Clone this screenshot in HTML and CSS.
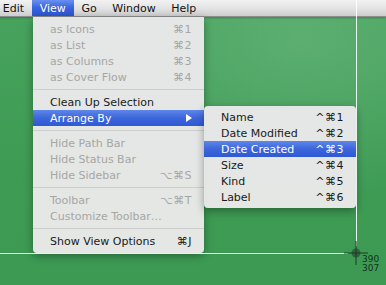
FILE: index.html
```html
<!DOCTYPE html>
<html lang="en">
<head>
  <meta charset="UTF-8">
  <title>Finder View Menu</title>
  <link rel="stylesheet" href="styles.css">
</head>
<body>
  <div class="screen">
    <div class="menubar">
      <span class="mb-item">Edit</span>
      <span class="mb-item active">View</span>
      <span class="mb-item">Go</span>
      <span class="mb-item">Window</span>
      <span class="mb-item">Help</span>
    </div>

    <!-- View menu -->
    <ul class="menu main-menu">
      <li class="off"><span>as Icons</span><span class="key">⌘1</span></li>
      <li class="off"><span>as List</span><span class="key">⌘2</span></li>
      <li class="off"><span>as Columns</span><span class="key">⌘3</span></li>
      <li class="off"><span>as Cover Flow</span><span class="key">⌘4</span></li>
      <li class="sep"></li>
      <li><span>Clean Up Selection</span></li>
      <li class="hl"><span>Arrange By</span><span class="arrow"></span></li>
      <li class="sep"></li>
      <li class="off"><span>Hide Path Bar</span></li>
      <li class="off"><span>Hide Status Bar</span></li>
      <li class="off"><span>Hide Sidebar</span><span class="key">⌥⌘S</span></li>
      <li class="sep"></li>
      <li class="off"><span>Toolbar</span><span class="key">⌥⌘T</span></li>
      <li class="off"><span>Customize Toolbar…</span></li>
      <li class="sep"></li>
      <li><span>Show View Options</span><span class="key">⌘J</span></li>
    </ul>

    <!-- Arrange By submenu -->
    <ul class="menu sub-menu">
      <li><span>Name</span><span class="key">^⌘1</span></li>
      <li><span>Date Modified</span><span class="key">^⌘2</span></li>
      <li class="hl"><span>Date Created</span><span class="key">^⌘3</span></li>
      <li><span>Size</span><span class="key">^⌘4</span></li>
      <li><span>Kind</span><span class="key">^⌘5</span></li>
      <li><span>Label</span><span class="key">^⌘6</span></li>
    </ul>

    <!-- screenshot selection -->
    <div class="sel-v"></div>
    <div class="sel-h"></div>
    <svg class="crosshair" width="26" height="26" viewBox="0 0 26 26">
      <circle cx="13" cy="13" r="4.5" fill="rgba(40,60,45,0.6)"/>
      <line x1="13" y1="1" x2="13" y2="25" stroke="#1f3a25" stroke-width="1"/>
      <line x1="1" y1="13" x2="25" y2="13" stroke="#1f3a25" stroke-width="1"/>
    </svg>
    <div class="coords">390<br>307</div>
  </div>
</body>
</html>
```

FILE: styles.css
```css
* {
  margin: 0;
  padding: 0;
  box-sizing: border-box;
}
body {
  font-family: "DejaVu Sans", sans-serif;
  font-size: 11px;
  background: #3f9b55;
}
.screen {
  position: relative;
  width: 386px;
  height: 285px;
  overflow: hidden;
  background:
    radial-gradient(ellipse 260px 160px at 300px 40px, rgba(110, 185, 130, 0.55), rgba(110, 185, 130, 0) 100%),
    linear-gradient(180deg, #47a35d 0%, #3e9b54 60%, #3c9a53 100%);
}
.menubar {
  display: flex;
  height: 17px;
  margin-left: -5px;
  width: 391px;
  background: linear-gradient(180deg, #f2f2f2 0%, #e2e2e2 55%, #cdcdcd 100%);
  border-bottom: 1px solid #8d8d8d;
  box-shadow: 0 1px 2px rgba(0, 0, 0, 0.25);
}
.mb-item {
  height: 16px;
  padding: 2px 7.8px 0;
  line-height: 14px;
  color: #111;
}
.mb-item.active {
  background: linear-gradient(180deg, #6a8ff0 0%, #3763dc 50%, #2c56d2 100%);
  color: #fff;
}
.menu {
  position: absolute;
  list-style: none;
  background: rgba(233, 233, 233, 0.97);
  box-shadow: 0 3px 8px rgba(0, 0, 0, 0.35);
}
.main-menu {
  top: 17px;
  left: 33px;
  width: 171px;
  padding: 4px 0;
  border-radius: 0 0 4px 4px;
}
.sub-menu {
  top: 106px;
  left: 204px;
  width: 152px;
  padding: 3px 0;
  border-radius: 4px;
}
.menu li {
  display: flex;
  justify-content: space-between;
  align-items: center;
  height: 16px;
  line-height: 14px;
  padding: 2px 12px 0 17px;
  color: #1a1a1a;
  white-space: nowrap;
}
.menu li.off {
  color: #a6a6a6;
}
.menu li.hl {
  background: linear-gradient(180deg, #5f86ea 0%, #3d66db 50%, #2f59d3 100%);
  color: #fff;
}
.menu li.sep {
  height: 1px;
  padding: 0;
  margin: 4px 0;
  background: #cdcdcd;
}
.key {
  letter-spacing: 0.5px;
}
.arrow {
  width: 0;
  height: 0;
  margin-top: -2px;
  border-top: 4px solid transparent;
  border-bottom: 4px solid transparent;
  border-left: 6px solid #fff;
}
.sel-v {
  position: absolute;
  left: 356px;
  top: 0;
  width: 1px;
  height: 246px;
  background: rgba(255, 255, 255, 0.9);
}
.sel-h {
  position: absolute;
  left: 0;
  top: 253px;
  width: 348px;
  height: 1px;
  background: rgba(255, 255, 255, 0.9);
}
.crosshair {
  position: absolute;
  left: 343px;
  top: 240px;
}
.coords {
  position: absolute;
  left: 362px;
  top: 255px;
  font-size: 9px;
  line-height: 9px;
  color: #16301c;
}
```
